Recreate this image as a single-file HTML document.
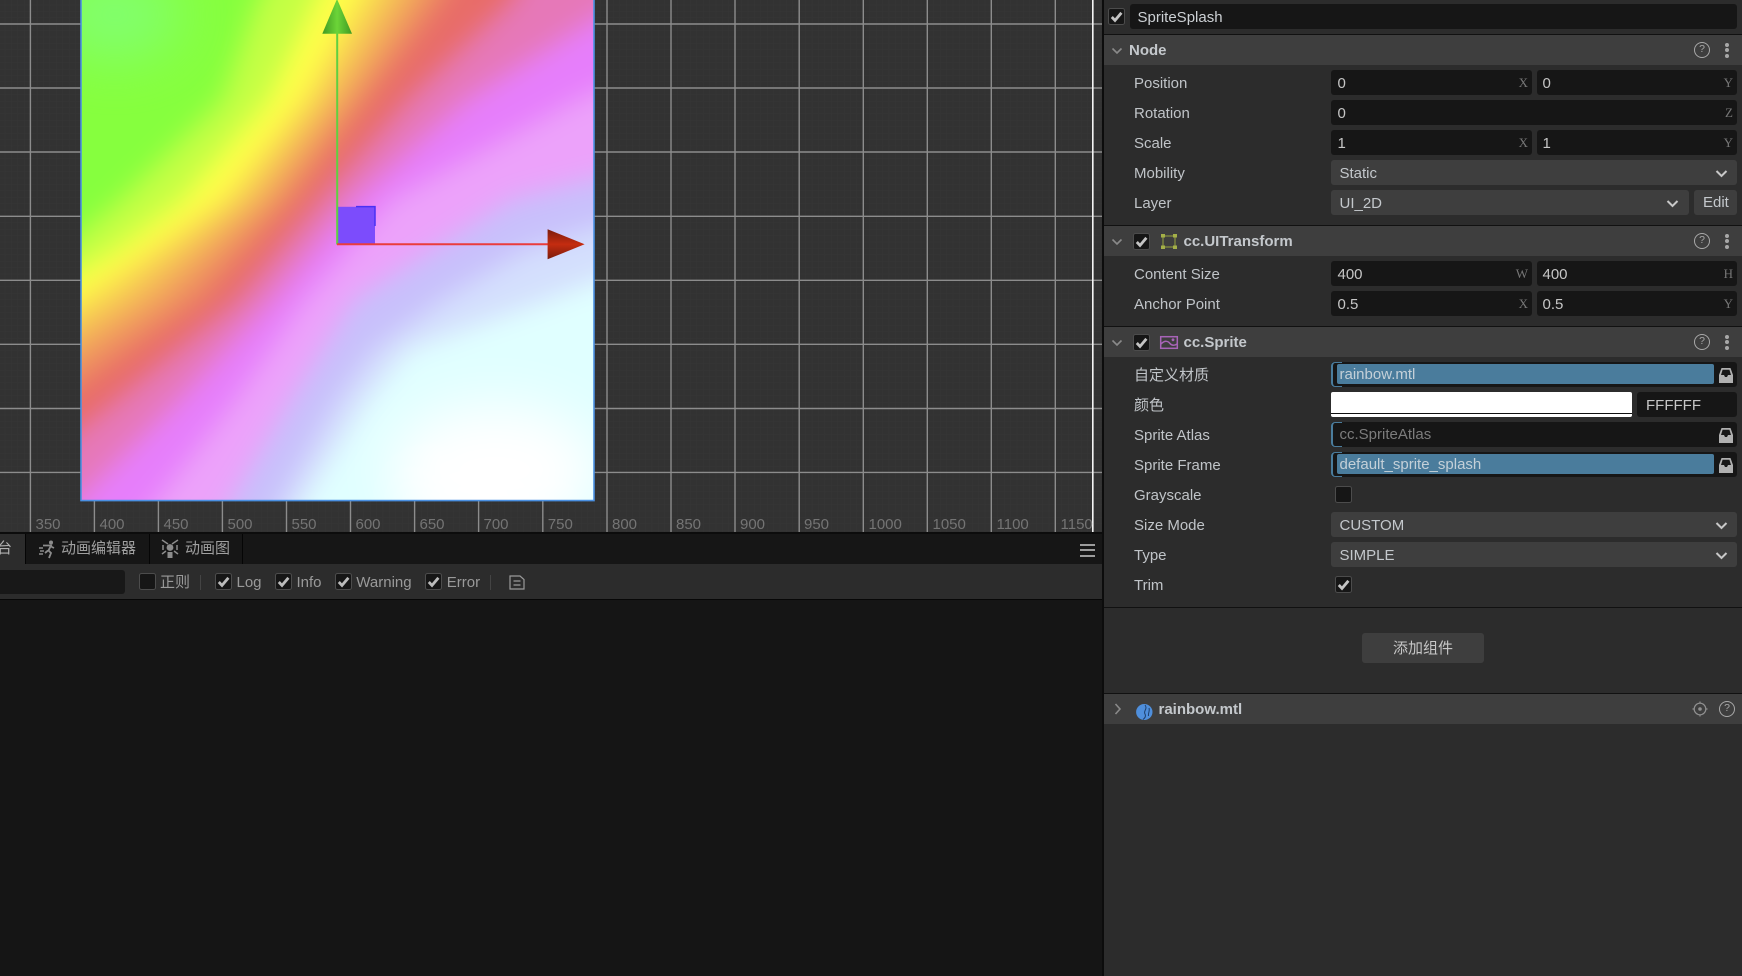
<!DOCTYPE html>
<html>
<head>
<meta charset="utf-8">
<style>
html,body{margin:0;padding:0;background:#151515;width:1742px;height:976px;overflow:hidden}
body{font:15px/25px "Liberation Sans","Noto Sans CJK SC",sans-serif;color:#c2c2c2;position:relative}
div,span{position:absolute;white-space:nowrap;box-sizing:border-box}
svg{position:absolute;display:block;overflow:visible}
.lab{left:1134px;height:25px;line-height:27px;color:#c0c4c8}
.in{background:#161616;border-radius:3px;height:25px;line-height:27px;padding-left:6.5px;color:#c6c6c6}
.n1{left:1331px;width:201px}
.n2{left:1537px;width:200px;padding-left:5.5px}
.n3{left:1331px;width:406px}
.ax{right:4px;top:0;font:13px/25px "Liberation Serif",serif;color:#777}
.sel{background:#3e3e3e;border-radius:3px;height:25px;line-height:27px;padding-left:8.5px;color:#c4c8cc}
.hdr{left:1104px;width:638px;height:30px;background:#3e3e3e}
.ln{left:1104px;width:638px;height:1.2px;background:#111}
.ht{line-height:32px;font-weight:bold;color:#c4c8cc;top:0}
.cb{width:17px;height:17px;background:#161616;border:1px solid #4c4c4c;border-radius:2.5px}
.tb{color:#9a9a9a;top:568px;line-height:30px}
.q{width:16px;height:16px;border:1.3px solid #a8a8a8;border-radius:50%;font:10.5px/13.5px "Liberation Sans",sans-serif;color:#a8a8a8;text-align:center}
.d{width:4px;height:4px;border-radius:50%;background:#a8a8a8}
.asset{left:1331px;width:406px;height:25px;background:#161616;border-radius:3px}
.br{left:0;top:0;width:11px;height:25px;border-left:2.4px solid #4a7c9c;border-top:1.2px solid #4a7c9c;border-bottom:1.2px solid #4a7c9c;border-radius:4px 0 0 4px}
.fill{left:6px;top:2px;width:377px;height:20px;background:#4a7c9c;border-radius:2px;line-height:21px;padding-left:2.5px;color:#c4d0d8}
</style>
</head>
<body>

<!-- scene canvas -->
<svg width="1102" height="532" viewBox="0 0 1102 532" style="left:0;top:0;overflow:hidden">
<defs>
<pattern id="mg" width="6.405" height="6.405" x="30.4" y="24" patternUnits="userSpaceOnUse">
<path d="M0 0H6.405M0 0V6.405" stroke="#363636" stroke-width="1" fill="none"/>
</pattern>
<filter id="bl" filterUnits="userSpaceOnUse" x="-300" y="-300" width="1600" height="1200" color-interpolation-filters="sRGB">
<feGaussianBlur stdDeviation="13"/>
</filter>
<filter id="bl2" filterUnits="userSpaceOnUse" x="-300" y="-300" width="1600" height="1200" color-interpolation-filters="sRGB">
<feGaussianBlur stdDeviation="28"/>
</filter>
<clipPath id="rc"><rect x="81" y="-12" width="513" height="513"/></clipPath>
<linearGradient id="gc" x1="0" x2="1" y1="0" y2="0">
<stop offset="0" stop-color="#3f9a22"/><stop offset=".5" stop-color="#6cd438"/><stop offset="1" stop-color="#3f9a22"/>
</linearGradient>
<linearGradient id="rcn" x1="0" x2="0" y1="0" y2="1">
<stop offset="0" stop-color="#7a1c0c"/><stop offset=".5" stop-color="#c42c10"/><stop offset="1" stop-color="#7a1c0c"/>
</linearGradient>
</defs>
<rect width="1102" height="532" fill="#323232"/>
<rect width="1102" height="532" fill="url(#mg)"/>
<g stroke="#8c8c8c" stroke-width="1.4" fill="none">
<path d="M0 24H1102M0 88H1102M0 152H1102M0 216.3H1102M0 280.3H1102M0 344.3H1102M0 408.5H1102M0 472.4H1102"/>
<path d="M30.4 0V532M94.4 0V532M158.4 0V532M222.4 0V532M286.5 0V532M350.5 0V532M414.6 0V532M478.6 0V532M542.8 0V532M607 0V532M671 0V532M735 0V532M799.2 0V532M863.3 0V532M927.3 0V532M991.3 0V532M1055.3 0V532"/>
</g>
<path d="M1092.8 0V532" stroke="#f4f4f4" stroke-width="1.6"/>
<g font-family="Liberation Sans" font-size="15" fill="#747474">
<text x="35.5" y="529">350</text><text x="99.5" y="529">400</text><text x="163.5" y="529">450</text><text x="227.5" y="529">500</text><text x="291.5" y="529">550</text><text x="355.5" y="529">600</text><text x="419.5" y="529">650</text><text x="483.5" y="529">700</text><text x="547.8" y="529">750</text><text x="612" y="529">800</text><text x="676" y="529">850</text><text x="740" y="529">900</text><text x="804" y="529">950</text><text x="868.5" y="529">1000</text><text x="932.5" y="529">1050</text><text x="996.5" y="529">1100</text><text x="1060.5" y="529">1150</text>
</g>

<!-- rainbow sprite -->
<g clip-path="url(#rc)">
<g filter="url(#bl)">
<rect x="-200" y="-200" width="1300" height="1000" fill="#86ff3e"/>
<polygon fill="#c4ff44" points="290,-60 258,0 222,100 120,200 60,250 -30,300 -100,340 -100,700 1000,700 1000,-60"/>
<polygon fill="#ffff48" points="345,-60 315,0 268,100 181,200 115,250 30,300 -100,370 -100,700 1000,700 1000,-60"/>
<polygon fill="#f9da50" points="392,-60 358,0 303,100 223,200 80,300 -94,400 -200,450 -200,700 1000,700 1000,-60"/>
<polygon fill="#f4b558" points="420,-60 386,0 324,100 246,200 120,300 -43,400 -200,480 -200,700 1000,700 1000,-60"/>
<polygon fill="#ee9060" points="448,-60 414,0 346,100 269,200 160,300 8,400 -200,500 -200,700 1000,700 1000,-60"/>
<polygon fill="#e86c68" points="476,-60 442,0 367,100 292,200 200,300 59,400 -100,500 -200,560 -200,700 1000,700 1000,-60"/>
<polygon fill="#e678b8" points="545,-60 512,0 407,100 320,200 237,300 116,400 -8,500 -100,570 -100,700 1000,700 1000,-60"/>
<polygon fill="#e67efb" points="670,-60 624,0 465,100 353,200 271,300 178,400 77,500 -20,600 -100,700 1000,700 1000,-60"/>
<polygon fill="#eca2fa" points="860,-60 800,0 577,100 391,200 304,300 235,400 157,500 80,600 0,700 1000,700 1000,-60"/>
<polygon fill="#c8c0fb" points="1000,50 900,100 511,200 354,300 291,400 232,500 170,600 100,700 1000,700"/>
<polygon fill="#d4dffd" points="1000,170 682,200 525,250 441,300 373,350 337,400 281,500 225,600 160,700 1000,700"/>
<polygon fill="#e0ffff" points="1000,150 828,200 675,250 547,300 408,350 367,400 304,500 255,600 200,700 1000,700"/>
</g>
<ellipse cx="115" cy="15" rx="65" ry="45" fill="#80ff78" opacity=".85" filter="url(#bl2)"/>
<ellipse cx="495" cy="470" rx="105" ry="65" fill="#fff" filter="url(#bl2)"/>
<ellipse cx="480" cy="500" rx="70" ry="35" fill="#fff" filter="url(#bl2)"/>
</g>
<path d="M81 -5V500.6H594V-5" fill="none" stroke="#4a90e2" stroke-width="1.6"/>

<!-- gizmo -->
<rect x="337.5" y="206.8" width="37.5" height="37.5" fill="#7c4cfc"/>
<path d="M356 206.6H375V226" fill="none" stroke="#4a30f4" stroke-width="1.5"/>
<path d="M337.2 33V244.5" stroke="#60d040" stroke-width="2"/>
<path d="M337 244.3H548" stroke="#ea3c3c" stroke-width="2"/>
<polygon points="337,-1 322.3,33.8 352,33.8" fill="url(#gc)"/>
<polygon points="547.6,229.3 584.6,244.3 547.6,259.3" fill="url(#rcn)"/>
</svg>

<!-- panel separators -->
<div style="left:0;top:532px;width:1104px;height:2px;background:#0c0c0c"></div>
<div style="left:1102px;top:0;width:2px;height:976px;background:#0c0c0c"></div>

<!-- tab bar -->
<div style="left:0;top:534px;width:1102px;height:30px;background:#161616"></div>
<div style="left:0;top:534px;width:25px;height:30px;background:#2c2c2c"></div>
<div style="left:25px;top:534px;width:1px;height:30px;background:#050505"></div>
<div style="left:149px;top:534px;width:1px;height:30px;background:#050505"></div>
<div style="left:242px;top:534px;width:1px;height:30px;background:#050505"></div>
<div style="left:-3px;top:534px;line-height:30px;color:#b0b0b0">台</div>
<div style="left:61px;top:534px;line-height:30px;color:#a0a0a0">动画编辑器</div>
<div style="left:185px;top:534px;line-height:30px;color:#a0a0a0">动画图</div>
<svg width="18" height="20" viewBox="0 0 18 20" style="left:38px;top:540px" fill="none" stroke="#8c8c8c" stroke-width="1.8">
<circle cx="13" cy="2.5" r="2" fill="#8c8c8c" stroke="none"/>
<path d="M5 5.5H13L10.5 10.5L13 13L11 18M13 6.5L16 8M10 10.5L7 13"/>
<path d="M1 8H5M2 11H6M1 14H5" stroke-width="1.4"/>
</svg>
<svg width="18" height="20" viewBox="0 0 18 20" style="left:161px;top:539px" fill="none" stroke="#8c8c8c" stroke-width="1.5">
<path d="M1 1L7 5M17 1L11 5M1 15L5 12M17 15L13 12M2 6V11M16 6V11"/>
<circle cx="9" cy="8.5" r="3.4" fill="#8c8c8c" stroke="none"/>
<rect x="6.5" y="13" width="5" height="6" fill="#8c8c8c" stroke="none"/>
</svg>
<div style="left:1080px;top:543.5px;width:15px;height:2px;background:#9c9c9c"></div>
<div style="left:1080px;top:549px;width:15px;height:2px;background:#9c9c9c"></div>
<div style="left:1080px;top:554.5px;width:15px;height:2px;background:#9c9c9c"></div>

<!-- console toolbar -->
<div style="left:0;top:564px;width:1102px;height:35px;background:#2c2c2c"></div>
<div style="left:0;top:599px;width:1102px;height:1px;background:#070707"></div>
<div style="left:-4px;top:570px;width:129px;height:24px;background:#181818;border-radius:3px"></div>
<div class="cb" style="left:139.3px;top:573.3px"></div>
<div class="tb" style="left:160px">正则</div>
<div style="left:200px;top:575px;width:1px;height:15px;background:#444"></div>
<div class="cb" style="left:215px;top:573.3px"><svg width="15" height="15" viewBox="0 0 15 15" style="left:0;top:0"><path d="M2.8 8L6 11.4L12.4 3.8" fill="none" stroke="#bcbcbc" stroke-width="2.8"/></svg></div>
<div class="tb" style="left:236.5px">Log</div>
<div class="cb" style="left:275px;top:573.3px"><svg width="15" height="15" viewBox="0 0 15 15" style="left:0;top:0"><path d="M2.8 8L6 11.4L12.4 3.8" fill="none" stroke="#bcbcbc" stroke-width="2.8"/></svg></div>
<div class="tb" style="left:296.5px">Info</div>
<div class="cb" style="left:335px;top:573.3px"><svg width="15" height="15" viewBox="0 0 15 15" style="left:0;top:0"><path d="M2.8 8L6 11.4L12.4 3.8" fill="none" stroke="#bcbcbc" stroke-width="2.8"/></svg></div>
<div class="tb" style="left:356.3px">Warning</div>
<div class="cb" style="left:425px;top:573.3px"><svg width="15" height="15" viewBox="0 0 15 15" style="left:0;top:0"><path d="M2.8 8L6 11.4L12.4 3.8" fill="none" stroke="#bcbcbc" stroke-width="2.8"/></svg></div>
<div class="tb" style="left:446.8px">Error</div>
<div style="left:490px;top:575px;width:1px;height:15px;background:#444"></div>
<svg width="16" height="15" viewBox="0 0 16 15" style="left:509px;top:575px" fill="none" stroke="#9a9a9a" stroke-width="1.2">
<path d="M1 1H11L15 4.5V14H1ZM4.5 6H11.5M4.5 10H11.5"/>
</svg>

<!-- inspector -->
<div style="left:1104px;top:0;width:638px;height:976px;background:#2c2c2c"></div>

<div class="cb" style="left:1108.3px;top:8.3px"><svg width="15" height="15" viewBox="0 0 15 15" style="left:0;top:0"><path d="M2.8 8L6 11.4L12.4 3.8" fill="none" stroke="#c4c4c4" stroke-width="2.8"/></svg></div>
<div class="in" style="left:1129.5px;top:4px;width:607.5px;padding-left:8px;color:#ccd0d4">SpriteSplash</div>

<div class="ln" style="top:34px"></div>
<div class="hdr" style="top:35px"><div class="ht" style="left:25px">Node</div></div>
<svg width="12" height="8" viewBox="0 0 12 8" style="left:1110.5px;top:46.5px"><path d="M1.5 1.5L6 6L10.5 1.5" fill="none" stroke="#8a8a8a" stroke-width="1.6"/></svg>
<div class="q" style="left:1694px;top:42px">?</div>
<div class="d" style="left:1724.5px;top:42.5px"></div><div class="d" style="left:1724.5px;top:48px"></div><div class="d" style="left:1724.5px;top:53.5px"></div>

<div class="lab" style="top:70px">Position</div>
<div class="in n1" style="top:70px">0<span class="ax">X</span></div>
<div class="in n2" style="top:70px">0<span class="ax">Y</span></div>
<div class="lab" style="top:100px">Rotation</div>
<div class="in n3" style="top:100px">0<span class="ax">Z</span></div>
<div class="lab" style="top:130px">Scale</div>
<div class="in n1" style="top:130px">1<span class="ax">X</span></div>
<div class="in n2" style="top:130px">1<span class="ax">Y</span></div>
<div class="lab" style="top:160px">Mobility</div>
<div class="sel n3" style="top:160px">Static</div>
<svg width="13" height="9" viewBox="0 0 13 9" style="left:1715px;top:169px"><path d="M1.5 2L6.5 7L11.5 2" fill="none" stroke="#c8c8c8" stroke-width="2"/></svg>
<div class="lab" style="top:190px">Layer</div>
<div class="sel" style="left:1331px;width:358px;top:190px">UI_2D</div>
<svg width="13" height="9" viewBox="0 0 13 9" style="left:1666px;top:199px"><path d="M1.5 2L6.5 7L11.5 2" fill="none" stroke="#c8c8c8" stroke-width="2"/></svg>
<div class="sel" style="left:1694px;width:43px;top:190px;padding-left:9px;line-height:25px">Edit</div>

<div class="ln" style="top:225px"></div>
<div class="hdr" style="top:226px"><div class="ht" style="left:79.5px">cc.UITransform</div></div>
<svg width="12" height="8" viewBox="0 0 12 8" style="left:1110.5px;top:237.5px"><path d="M1.5 1.5L6 6L10.5 1.5" fill="none" stroke="#8a8a8a" stroke-width="1.6"/></svg>
<div class="cb" style="left:1133px;top:232.7px"><svg width="15" height="15" viewBox="0 0 15 15" style="left:0;top:0"><path d="M2.8 8L6 11.4L12.4 3.8" fill="none" stroke="#c4c4c4" stroke-width="2.8"/></svg></div>
<svg width="16" height="15" viewBox="0 0 16 15" style="left:1160.5px;top:234px">
<rect x="2" y="2" width="12" height="11" fill="none" stroke="#8e9a40" stroke-width="1.1"/>
<g fill="#a4b048"><rect x="0" y="0" width="4" height="3.5"/><rect x="12" y="0" width="4" height="3.5"/><rect x="0" y="11.5" width="4" height="3.5"/><rect x="12" y="11.5" width="4" height="3.5"/></g>
</svg>
<div class="q" style="left:1694px;top:233px">?</div>
<div class="d" style="left:1724.5px;top:233.5px"></div><div class="d" style="left:1724.5px;top:239px"></div><div class="d" style="left:1724.5px;top:244.5px"></div>

<div class="lab" style="top:261px">Content Size</div>
<div class="in n1" style="top:261px">400<span class="ax">W</span></div>
<div class="in n2" style="top:261px">400<span class="ax">H</span></div>
<div class="lab" style="top:291px">Anchor Point</div>
<div class="in n1" style="top:291px">0.5<span class="ax">X</span></div>
<div class="in n2" style="top:291px">0.5<span class="ax">Y</span></div>

<div class="ln" style="top:326px"></div>
<div class="hdr" style="top:327px"><div class="ht" style="left:79.5px">cc.Sprite</div></div>
<svg width="12" height="8" viewBox="0 0 12 8" style="left:1110.5px;top:338.5px"><path d="M1.5 1.5L6 6L10.5 1.5" fill="none" stroke="#8a8a8a" stroke-width="1.6"/></svg>
<div class="cb" style="left:1133px;top:333.7px"><svg width="15" height="15" viewBox="0 0 15 15" style="left:0;top:0"><path d="M2.8 8L6 11.4L12.4 3.8" fill="none" stroke="#c4c4c4" stroke-width="2.8"/></svg></div>
<svg width="18" height="13" viewBox="0 0 18 13" style="left:1160px;top:336px" fill="none" stroke="#a864b8" stroke-width="1.5">
<rect x=".7" y=".7" width="16.6" height="11.6"/>
<path d="M1 8C5 4 8 5 10 7.5C12 10 15 9.5 17 8"/>
<circle cx="13" cy="3.8" r="1.4" fill="#a864b8" stroke="none"/>
</svg>
<div class="q" style="left:1694px;top:334px">?</div>
<div class="d" style="left:1724.5px;top:334.5px"></div><div class="d" style="left:1724.5px;top:340px"></div><div class="d" style="left:1724.5px;top:345.5px"></div>

<div class="lab" style="top:362px">自定义材质</div>
<div class="asset" style="top:362px"><div class="br"></div><div class="fill">rainbow.mtl</div>
<svg width="14" height="15" viewBox="0 0 14 15" style="left:388px;top:6px"><path d="M2.5 0H11.5L14 7V15H0V7Z" fill="#b0b0b0"/><path d="M3.6 1.8H10.4L12 7H9L8 9H6L5 7H2Z" fill="#161616"/></svg></div>

<div class="lab" style="top:392px">颜色</div>
<div style="left:1331px;top:392px;width:301px;height:25px;background:#fff;border-radius:2px"></div>
<div style="left:1331px;top:413px;width:301px;height:1.2px;background:#111"></div>
<div class="in" style="left:1637px;width:100px;top:392px;padding-left:9px">FFFFFF</div>

<div class="lab" style="top:422px">Sprite Atlas</div>
<div class="asset" style="top:422px"><div class="br"></div><div style="left:8.5px;top:2px;line-height:21px;color:#7c7c7c">cc.SpriteAtlas</div>
<svg width="14" height="15" viewBox="0 0 14 15" style="left:388px;top:6px"><path d="M2.5 0H11.5L14 7V15H0V7Z" fill="#b0b0b0"/><path d="M3.6 1.8H10.4L12 7H9L8 9H6L5 7H2Z" fill="#161616"/></svg></div>

<div class="lab" style="top:452px">Sprite Frame</div>
<div class="asset" style="top:452px"><div class="br"></div><div class="fill">default_sprite_splash</div>
<svg width="14" height="15" viewBox="0 0 14 15" style="left:388px;top:6px"><path d="M2.5 0H11.5L14 7V15H0V7Z" fill="#b0b0b0"/><path d="M3.6 1.8H10.4L12 7H9L8 9H6L5 7H2Z" fill="#161616"/></svg></div>

<div class="lab" style="top:482px">Grayscale</div>
<div class="cb" style="left:1335px;top:486px"></div>
<div class="lab" style="top:512px">Size Mode</div>
<div class="sel n3" style="top:512px">CUSTOM</div>
<svg width="13" height="9" viewBox="0 0 13 9" style="left:1715px;top:521px"><path d="M1.5 2L6.5 7L11.5 2" fill="none" stroke="#c8c8c8" stroke-width="2"/></svg>
<div class="lab" style="top:542px">Type</div>
<div class="sel n3" style="top:542px">SIMPLE</div>
<svg width="13" height="9" viewBox="0 0 13 9" style="left:1715px;top:551px"><path d="M1.5 2L6.5 7L11.5 2" fill="none" stroke="#c8c8c8" stroke-width="2"/></svg>
<div class="lab" style="top:572px">Trim</div>
<div class="cb" style="left:1335px;top:576px"><svg width="15" height="15" viewBox="0 0 15 15" style="left:0;top:0"><path d="M2.8 8L6 11.4L12.4 3.8" fill="none" stroke="#c4c4c4" stroke-width="2.8"/></svg></div>

<div class="ln" style="top:607px"></div>
<div style="left:1362px;top:633px;width:122px;height:30px;background:#3e3e3e;border-radius:3px;text-align:center;line-height:32px;color:#c6c6c6">添加组件</div>

<div class="ln" style="top:693px"></div>
<div class="hdr" style="top:694px"><div class="ht" style="left:54.5px">rainbow.mtl</div></div>
<svg width="8" height="12" viewBox="0 0 8 12" style="left:1113.5px;top:703px"><path d="M1.5 1L6 6L1.5 11" fill="none" stroke="#8a8a8a" stroke-width="1.6"/></svg>
<svg width="17" height="16" viewBox="0 0 17 16" style="left:1136px;top:703.5px">
<ellipse cx="8.3" cy="8" rx="8.2" ry="8" fill="#4f8fdc"/>
<path d="M9 1C12 5 7 7 9 10C10 12 9 14 7 15.5M13 4C14 7 12 9 12.5 12" fill="none" stroke="#1e3f6c" stroke-width="1"/>
</svg>
<svg width="16" height="16" viewBox="0 0 16 16" style="left:1692px;top:701px" fill="none" stroke="#909090" stroke-width="1.2">
<circle cx="8" cy="8" r="5.8"/><circle cx="8" cy="8" r="1.8" fill="#909090" stroke="none"/>
<path d="M8 0.5V2.5M8 13.5V15.5M0.5 8H2.5M13.5 8H15.5"/>
</svg>
<div class="q" style="left:1719px;top:701px">?</div>

</body>
</html>
